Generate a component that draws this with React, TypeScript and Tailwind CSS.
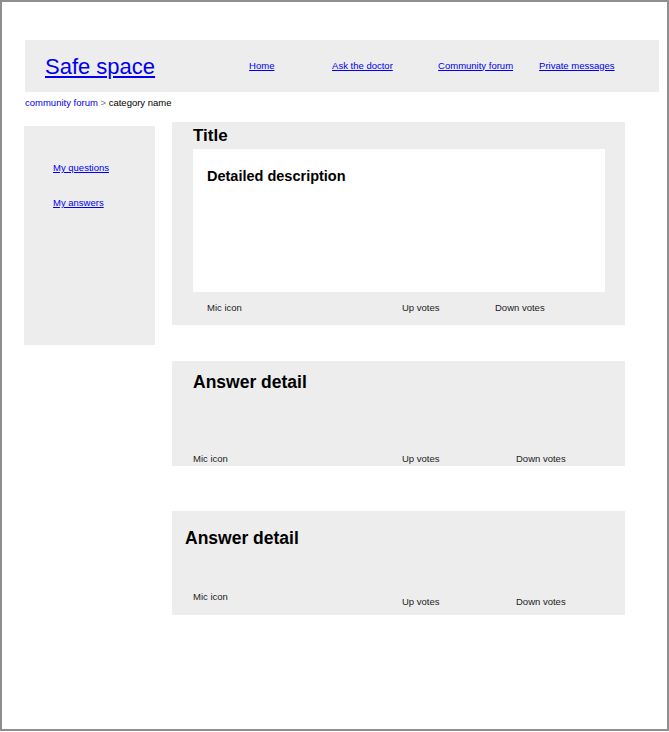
import React from "react";

const navLinks = ["Home", "Ask the doctor", "Community forum", "Private messages"];

const App = () => {
  return (
    <div className="w-[669px] h-[731px] border-2 border-[#8f8f8f] bg-white font-['Liberation_Sans',Arial,sans-serif] text-black">
      {/* header */}
      <div className="mt-[38px] ml-[23px] w-[634px] h-[52px] bg-[#ededed] flex items-center">
        <a href="#" className="ml-[20px] text-[22px] leading-[25px] text-[#0000ee] underline">
          Safe space
        </a>
        <nav className="ml-[94px] mb-[2px] grid grid-cols-[83px_106px_101px_auto] items-center text-[9.5px] leading-[11px]">
          {navLinks.map((l) => (
            <a key={l} href="#" className="text-[#0000ee] underline whitespace-nowrap">
              {l}
            </a>
          ))}
        </nav>
      </div>

      {/* breadcrumb */}
      <div className="h-[30px] ml-[23px] pt-[5px] text-[9.5px] leading-[11px]">
        <a href="#" className="text-[#0000ee]">community forum</a>
        <span className="text-[#777]"> &gt; </span>
        <span>category name</span>
      </div>

      <div className="flex items-start">
        {/* sidebar */}
        <div className="ml-[22px] mt-[4px] w-[131px] h-[219px] bg-[#ededed] pl-[29px] pt-[36px] flex flex-col gap-[24px] text-[9.5px] leading-[11px]">
          <a href="#" className="text-[#0000ee] underline">My questions</a>
          <a href="#" className="text-[#0000ee] underline">My answers</a>
        </div>

        {/* main */}
        <div className="ml-[17px] w-[453px] flex flex-col">
          {/* question */}
          <div className="h-[203px] bg-[#ededed] flex flex-col">
            <div className="pl-[21px] pt-[4px] text-[17px] leading-[19px] font-bold">Title</div>
            <div className="mt-[4px] ml-[21px] w-[412px] h-[143px] bg-white pl-[14px] pt-[19px] text-[14.5px] leading-[16px] font-bold">
              Detailed description
            </div>
            <div className="flex-1 flex items-center pb-[2px] pl-[35px] text-[9.5px] leading-[11px] text-[#222]">
              <span className="w-[195px]">Mic icon</span>
              <span className="w-[93px]">Up votes</span>
              <span>Down votes</span>
            </div>
          </div>

          {/* answers */}
          <div className="mt-[36px] h-[105px] bg-[#ededed] flex flex-col">
            <div className="pl-[21px] pt-[11px] text-[17.5px] leading-[20px] font-bold">Answer detail</div>
            <div className="mt-auto pb-[2px] flex items-center pl-[21px] text-[9.5px] leading-[11px] text-[#222]">
              <span className="w-[209px]">Mic icon</span>
              <span className="w-[114px]">Up votes</span>
              <span>Down votes</span>
            </div>
          </div>

          <div className="mt-[45px] h-[104px] bg-[#ededed] flex flex-col">
            <div className="pl-[13px] pt-[17px] text-[17.5px] leading-[20px] font-bold">Answer detail</div>
            <div className="mt-auto pb-[8px] flex items-end pl-[21px] text-[9.5px] leading-[11px] text-[#222]">
              <span className="w-[209px] mb-[5px]">Mic icon</span>
              <span className="w-[114px]">Up votes</span>
              <span>Down votes</span>
            </div>
          </div>
        </div>
      </div>
    </div>
  );
};

export default App;
